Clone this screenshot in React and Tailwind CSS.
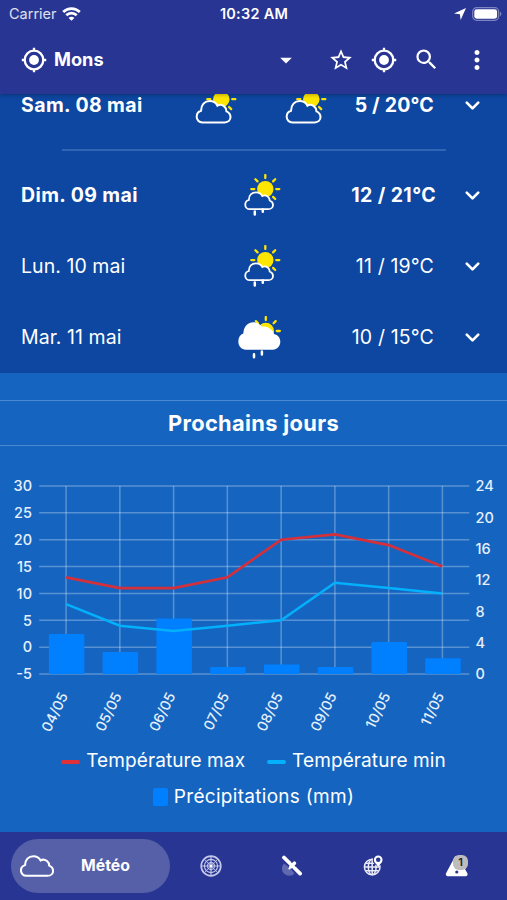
import { ChevronDown } from 'lucide-react'
import { MdArrowDropDown, MdMoreVert, MdSearch, MdStarBorder } from 'react-icons/md'

const CLOUD =
  'M19 67C9 67 2 59 2 50C2 40 8 34 15 32C15 14 26 3 41 3C52 3 60 9 64 17C70 13 78 14 84 19C89 23 91 28 91 34C98 37 103 43 103 51C103 60 96 67 86 67Z'
const BIG_CLOUD =
  'M24 82C10 82 1 71 1 58C1 46 7 38 16 35C17 14 30 2 46 2C58 2 67 8 71 15C82 13 92 16 99 23C104 27 107 31 108 36C120 39 127 47 127 58C127 71 118 82 104 82Z'

const days = [
  { label: 'Dim. 09 mai', temp: '12 / 21°C', icon: 'shower', bold: true },
  { label: 'Lun. 10 mai', temp: '11 / 19°C', icon: 'shower' },
  { label: 'Mar. 11 mai', temp: '10 / 15°C', icon: 'overcast' },
]

const forecast = [
  { date: '04/05', max: 13, min: 8, rain: 5.1 },
  { date: '05/05', max: 11, min: 4, rain: 2.8 },
  { date: '06/05', max: 11, min: 3, rain: 7.1 },
  { date: '07/05', max: 13, min: 4, rain: 0.9 },
  { date: '08/05', max: 20, min: 5, rain: 1.2 },
  { date: '09/05', max: 21, min: 12, rain: 0.9 },
  { date: '10/05', max: 19, min: 11, rain: 4.1 },
  { date: '11/05', max: 15, min: 10, rain: 2 },
]

function Sun({ x, y }) {
  return (
    <g transform={`translate(${x} ${y})`}>
      <circle r="8.2" fill="#ffe600" />
      {[0, 45, 90, 135, 180, 225, 270, 315].map(a => (
        <path key={a} d="M11 0H14" stroke="#ffe600" strokeWidth="2.3" strokeLinecap="round" transform={`rotate(${a})`} />
      ))}
    </g>
  )
}

function WeatherIcon({ type }) {
  if (type === 'cloudy') {
    return (
      <svg width="44" height="44" viewBox="0 0 44 44">
        <Sun x={26.3} y={15.2} />
        <g transform="translate(1 16) scale(.335)">
          <path d={CLOUD} fill="#0d47a1" stroke="#fff" strokeWidth="6" />
        </g>
      </svg>
    )
  }
  if (type === 'overcast') {
    return (
      <svg width="44" height="44" viewBox="0 0 44 44">
        <Sun x={28.8} y={15} />
        <g transform="translate(1 5.6) scale(.333 .342)">
          <path d={BIG_CLOUD} fill="#fff" />
        </g>
        <path d="M17 38.2v3M24.9 35.6v3" stroke="#fff" strokeWidth="2.5" strokeLinecap="round" />
      </svg>
    )
  }
  return (
    <svg width="44" height="44" viewBox="0 0 44 44">
      <Sun x={28.3} y={15.1} />
      <g transform="translate(7.7 17.6) scale(.275 .262)">
        <path d={CLOUD} fill="#0d47a1" stroke="#fff" strokeWidth="6.5" />
      </g>
      <path d="M17.8 37.4v3.2M25.8 35.4v2.4" stroke="#fff" strokeWidth="2.5" strokeLinecap="round" />
    </svg>
  )
}

function Target() {
  return (
    <svg width="26" height="26" viewBox="0 0 26 26" fill="none" stroke="#fff" strokeWidth="2.3">
      <circle cx="13" cy="13" r="9.3" />
      <circle cx="13" cy="13" r="4.9" fill="#fff" stroke="none" />
      <path d="M13 .8v3M13 22.2v3M.8 13h3M22.2 13h3" />
    </svg>
  )
}

function StatusBar() {
  return (
    <div className="flex h-7 items-center justify-between pl-[9px] pr-[5px]">
      <div className="flex w-40 items-center gap-1.5">
        <span className="text-[14.5px] text-white/85">Carrier</span>
        <svg width="19" height="14" viewBox="0 0 19 14" fill="none" stroke="#fff" strokeWidth="2.7" className="-ml-px">
          <path d="M1.2 5a11.8 11.8 0 0 1 16.6 0M4.3 8.3a7.4 7.4 0 0 1 10.4 0" />
          <path d="M9.5 13.8 6.6 10.9a4 4 0 0 1 5.8 0Z" fill="#fff" stroke="none" />
        </svg>
      </div>
      <span className="mr-[3px] text-[14.5px] font-semibold tracking-[.25px]">10:32 AM</span>
      <div className="flex w-40 items-center justify-end gap-1.5">
        <svg width="12" height="12" viewBox="0 0 11 11" fill="#fff">
          <path d="M11 0 6.1 11 5.4 5.7 0 5Z" />
        </svg>
        <svg width="30" height="14" viewBox="0 0 30 14" className="-mt-px">
          <rect x=".7" y=".7" width="26" height="12.6" rx="4" fill="none" stroke="#fff" strokeOpacity=".4" strokeWidth="1.2" />
          <rect x="2.3" y="2.3" width="22.8" height="9.4" rx="2.4" fill="#fff" />
          <path d="M28 4.8a2.4 2.4 0 0 1 0 4.4Z" fill="#fff" fillOpacity=".4" />
        </svg>
      </div>
    </div>
  )
}

function Header() {
  return (
    <header className="relative z-10 h-[94px] bg-[#283593] shadow-[0_1px_4px_rgba(0,0,0,.3)]">
      <StatusBar />
      <div className="flex h-[63px] items-center pl-[21px]">
        <Target />
        <span className="ml-[7px] w-[226px] text-[18.2px] font-bold">Mons</span>
        <MdArrowDropDown size={28} className="-ml-[8px]" />
        <MdStarBorder size={26} className="ml-7" />
        <span className="ml-[17px]"><Target /></span>
        <MdSearch size={27} className="ml-4" />
        <MdMoreVert size={30} className="ml-[22px]" />
      </div>
    </header>
  )
}

function DayRow({ day }) {
  return (
    <div className={`flex h-[71px] items-center text-[19.5px] ${day.bold ? 'font-bold tracking-[.4px]' : 'tracking-[.05px]'}`}>
      <span className="w-[216px] pl-[21px]">{day.label}</span>
      <span className="w-[66px] pl-[21px]"><WeatherIcon type={day.icon} /></span>
      <span className={`text-right ${day.bold ? 'w-[154px]' : 'w-[152px] tracking-[.15px]'}`}>{day.temp}</span>
      <ChevronDown size={23} strokeWidth={2.8} className={day.bold ? 'ml-[25px]' : 'ml-[27px]'} />
    </div>
  )
}

const left = 39.2
const right = 469.3
const top = 16
const bottom = 204
const step = (right - left) / forecast.length
const xAt = i => left + step * (i + 0.5)
const tempY = v => bottom - ((v + 5) / 35) * (bottom - top)
const rainY = v => bottom - (v / 24) * (bottom - top)
const line = key => forecast.map((d, i) => `${xAt(i)},${tempY(d[key])}`).join(' ')

function Chart() {
  return (
    <svg width="507" height="270" viewBox="0 0 507 270" className="block">
      <g stroke="#fff" strokeOpacity=".29" strokeWidth="1.5">
        {[30, 25, 20, 15, 10, 5, 0, -5].map(v => (
          <line key={v} x1={left} x2={right} y1={tempY(v)} y2={tempY(v)} />
        ))}
        {forecast.map((d, i) => (
          <line key={d.date} x1={xAt(i)} x2={xAt(i)} y1={top} y2={bottom} />
        ))}
      </g>
      {forecast.map((d, i) => (
        <rect key={d.date} x={xAt(i) - 17.2} y={rainY(d.rain)} width="35.5" height={bottom - rainY(d.rain)} rx="1" fill="#007fff" />
      ))}
      <polyline points={line('max')} fill="none" stroke="#d3303b" strokeWidth="2.7" />
      <polyline points={line('min')} fill="none" stroke="#03b0fc" strokeWidth="2.5" />
      <g fill="#e6f0fc" fontSize="14.5" fontWeight="500">
        {[30, 25, 20, 15, 10, 5, 0].map(v => (
          <text key={v} x="32" y={tempY(v) + 5.3} textAnchor="end">{v}</text>
        ))}
        <text x="32" y={bottom + 5.3} textAnchor="end">-5</text>
        {[24, 20, 16, 12, 8, 4, 0].map(v => (
          <text key={v} x="475.5" y={rainY(v) + 5.3}>{v}</text>
        ))}
        {forecast.map((d, i) => (
          <text key={d.date} textAnchor="end" fontSize="14.2" transform={`translate(${xAt(i) + 2.2} 225.5) rotate(-64)`}>{d.date}</text>
        ))}
      </g>
    </svg>
  )
}

function BottomNav() {
  return (
    <nav className="flex h-[68px] items-center bg-[#283593] pl-[11px]">
      <div className="flex h-[54px] w-[159px] items-center rounded-full bg-[#5560a9] pl-[9px]">
        <svg width="34" height="22" viewBox="-1 -1 107 72" preserveAspectRatio="none">
          <path d={CLOUD} fill="none" stroke="#fff" strokeWidth="6.5" />
        </svg>
        <span className="-mt-px ml-[27px] text-[15.8px] font-bold">Météo</span>
      </div>
      <svg width="22" height="22" viewBox="0 0 22 22" fill="none" stroke="#c3c8ea" className="ml-[30px]">
        <circle cx="11" cy="11" r="9.8" strokeWidth="1.7" />
        <circle cx="11" cy="11" r="6.6" strokeWidth="1.1" />
        <circle cx="11" cy="11" r="3.4" strokeWidth="1.1" />
        <path d="M11 1v20M1 11h20" strokeWidth="1.2" />
        <path d="M4 4l14 14M18 4 4 18" strokeWidth=".8" />
        <circle cx="11" cy="11" r="1.5" fill="#fff" stroke="none" />
      </svg>
      <svg width="22" height="22" viewBox="0 0 22 22" className="ml-[59px]">
        <path d="M3 8.5A7.2 7.2 0 1 0 13.5 18.6L9 13Z" fill="#6069b0" />
        <path d="M3 2.5 8 7.5M14.5 14l4.6 4.6" stroke="#fff" strokeWidth="3.8" strokeLinecap="round" />
        <path d="m8 7.5 6.5 6.5" stroke="#fff" strokeWidth="3.2" />
        <path d="m13.4 8.2-3.6 3.6" stroke="#fff" strokeWidth="3.6" strokeLinecap="round" />
        <path d="M10 11.8 7.6 14.2" stroke="#fff" strokeWidth="1.4" />
      </svg>
      <svg width="22" height="22" viewBox="0 0 22 22" fill="none" stroke="#e8eaf8" strokeWidth="1.5" className="ml-[60px]">
        <circle cx="9.2" cy="12" r="7.8" />
        <ellipse cx="9.2" cy="12" rx="3.9" ry="7.8" />
        <path d="M9.2 4.2v15.6M1.4 12h15.6M2.6 8.2h13M2.6 15.8h13" />
        <circle cx="15.2" cy="5.2" r="3.4" fill="#283593" stroke="#283593" strokeWidth="4" />
        <path d="m11.8 7 3.4 5 3.4-5Z" fill="#fff" stroke="none" />
        <circle cx="15.2" cy="4.8" r="3.3" fill="#283593" stroke="#fff" strokeWidth="2.1" />
      </svg>
      <div className="relative ml-[60px] h-[22px] w-6">
        <svg width="24" height="22" viewBox="0 0 24 22">
          <path d="M11.5 3 2.8 19.2h17.8Z" fill="#fff" stroke="#fff" strokeWidth="4" strokeLinejoin="round" />
          <circle cx="11.8" cy="17" r="1.6" fill="#283593" />
        </svg>
        <span className="absolute left-[8px] top-0 flex size-[15px] items-center justify-center rounded-[6px] bg-[#bdbdbd] text-[11px] font-semibold text-[#222]">1</span>
      </div>
    </nav>
  )
}

export default function App() {
  return (
    <div className="flex h-[900px] w-[507px] flex-col overflow-hidden bg-[#1565c0] font-['Inter',sans-serif] text-white">
      <Header />
      <section className="h-[279px] bg-[#0d47a1]">
        <div className="-mt-[11px] flex h-[46px] items-center text-[19.5px] font-bold tracking-[.4px]">
          <span className="w-[195px] pl-[21px]">Sam. 08 mai</span>
          <WeatherIcon type="cloudy" />
          <span className="ml-[46px]"><WeatherIcon type="cloudy" /></span>
          <span className="w-[105px] text-right tracking-[.2px]">5 / 20°C</span>
          <ChevronDown size={23} strokeWidth={2.8} className="-mt-[2px] ml-[27px]" />
        </div>
        <div className="ml-[62px] mt-[20px] mb-[9px] h-[2px] w-[384px] bg-[#2f65b3]" />
        {days.map(d => <DayRow key={d.label} day={d} />)}
      </section>
      <h2 className="mt-[27px] flex h-[46px] items-center justify-center border-y border-[#4a88d0] pt-px text-[21.8px] font-bold tracking-[.35px]">
        Prochains jours
      </h2>
      <div className="mt-[24px]"><Chart /></div>
      <div className="flex h-[92px] flex-col items-center pt-[4px] text-[19px] tracking-[.1px]">
        <div className="flex h-[35px] items-center">
          <span className="h-[4px] w-[19px] rounded-sm bg-[#e03038]" />
          <span className="ml-[6px]">Température max</span>
          <span className="ml-[22px] h-[4px] w-[19px] rounded-sm bg-[#03b0fc]" />
          <span className="ml-[6px]">Température min</span>
        </div>
        <div className="flex h-[36px] items-center tracking-[.3px]">
          <span className="h-[18px] w-[15px] rounded-[2px] bg-[#007fff]" />
          <span className="ml-[6px]">Précipitations (mm)</span>
        </div>
      </div>
      <BottomNav />
    </div>
  )
}
